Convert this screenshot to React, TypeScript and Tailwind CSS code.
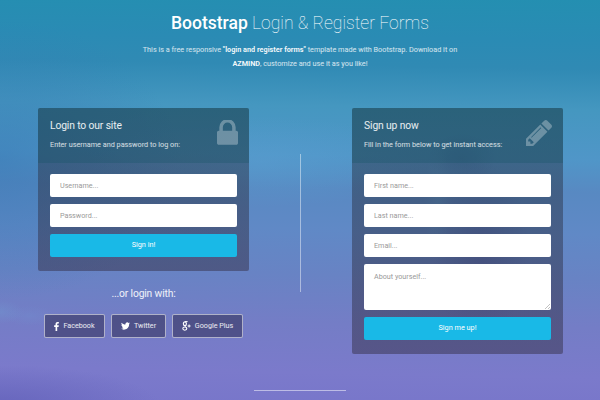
import type { ReactNode } from 'react';

const fieldClass =
  'block w-full rounded-[2px] bg-white px-[10px] text-[7.2px] text-[#777] placeholder:text-[#999] placeholder:opacity-100 outline-none';

function LockIcon() {
  return (
    <svg viewBox="320 192 1152 1344" className="h-[25px] w-[21px] shrink-0 fill-current">
      <path d="M640 768h512v-192q0-106-75-181t-181-75-181 75-75 181v192zm832 96v576q0 40-28 68t-68 28h-960q-40 0-68-28t-28-68v-576q0-40 28-68t68-28h32v-192q0-184 132-316t316-132 316 132 132 316v192h32q40 0 68 28t28 68z" />
    </svg>
  );
}

function PencilIcon() {
  return (
    <svg viewBox="128 149 1515 1515" className="h-[26px] w-[26px] shrink-0 fill-current">
      <path d="M491 1536l91-91-235-235-91 91v107h128v128h107zm523-928q0-22-22-22-10 0-17 7l-542 542q-7 7-7 17 0 22 22 22 10 0 17-7l542-542q7-7 7-17zm-54-192l416 416-832 832h-416v-416zm683 96q0 53-37 90l-166 166-416-416 166-165q36-38 90-38 53 0 91 38l235 234q37 39 37 91z" />
    </svg>
  );
}

function FacebookIcon() {
  return (
    <svg viewBox="479 0 864 1664" className="h-[9px] w-[5px] fill-white">
      <path d="M1343 12v264h-157q-86 0-116 36t-30 108v189h293l-39 296h-254v759h-306v-759h-255v-296h255v-218q0-186 104-288.500t277-102.500q147 0 228 12z" />
    </svg>
  );
}

function TwitterIcon() {
  return (
    <svg viewBox="108 256 1576 1280" className="h-[8px] w-[9px] fill-white">
      <path d="M1684 408q-67 98-162 167 1 14 1 42 0 130-38 259.500t-115.500 248.500-184.500 210.500-258 146-323 54.500q-271 0-496-145 35 4 78 4 225 0 401-138-105-2-188-64.500t-114-159.500q33 5 61 5 43 0 85-11-112-23-185.500-111.500t-73.500-205.500v-4q68 38 146 41-66-44-105-115t-39-154q0-88 44-163 121 149 294.500 238.500t371.500 99.500q-8-38-8-74 0-134 94.500-228.500t228.500-94.500q140 0 236 102 109-21 205-78-37 115-142 178 93-10 186-50z" />
    </svg>
  );
}

function GooglePlusIcon() {
  return (
    <svg viewBox="0 0 9 10" className="h-[10px] w-[9px] fill-none stroke-white">
      <ellipse cx="2.9" cy="2.7" rx="1.5" ry="1.9" strokeWidth="1.2" />
      <path d="M3 .6h2.6M3.6 4.5c-.8.7-.4 1 .4 1.5" strokeWidth="1" />
      <ellipse cx="2.8" cy="7.6" rx="2" ry="1.6" strokeWidth="1.1" />
      <path d="M7.1 3.5v3M5.6 5h3" strokeWidth="1" />
    </svg>
  );
}

function Panel({ title, hint, icon, children }: { title: string; hint: string; icon: ReactNode; children: ReactNode }) {
  return (
    <section className="overflow-hidden rounded-[2px] bg-linear-to-b from-[#25394b]/50 to-[#352f48]/50">
      <header className="flex h-[55px] justify-between bg-[#0c4f5c]/25 pl-3 pr-[11px] pt-[11px]">
        <div>
          <h3 className="text-[10.3px] leading-[14px] tracking-[-0.12px] text-white/90">{title}</h3>
          <p className="mt-[5px] text-[7.27px] leading-[13px] text-white/80">{hint}</p>
        </div>
        <div className="pt-[1px] text-white/30">{icon}</div>
      </header>
      <form className="flex flex-col gap-[7px] px-3 pb-[13.5px] pt-[11px]">{children}</form>
    </section>
  );
}

function Submit({ children }: { children: ReactNode }) {
  return (
    <button type="button" className="h-[23px] rounded-[2px] bg-[#19b9e7] text-center text-[7.3px] text-white">
      {children}
    </button>
  );
}

function Social({ icon, label, width }: { icon: ReactNode; label: string; width: string }) {
  return (
    <a className={`flex h-[24px] items-center justify-center gap-1 rounded-[2px] border border-white/55 bg-[#2f2d55]/55 text-[7.2px] text-white/90 ${width}`}>
      {icon}
      <span>{label}</span>
    </a>
  );
}

export default function App() {
  return (
    <div className="h-[400px] w-[600px] overflow-hidden bg-[radial-gradient(ellipse_26px_10px_at_30px_316px,#6f95d444,transparent),radial-gradient(ellipse_24px_12px_at_0px_312px,#6f9fd455,transparent),radial-gradient(ellipse_50px_90px_at_480px_250px,#43439055,transparent),radial-gradient(ellipse_34px_24px_at_462px_158px,#2c5c9544,transparent),radial-gradient(ellipse_14px_60px_at_438px_205px,#67b0d444,transparent),radial-gradient(ellipse_170px_45px_at_260px_162px,#5a9fd177,transparent),radial-gradient(ellipse_160px_40px_at_0px_405px,#6160b8bb,transparent),radial-gradient(ellipse_180px_140px_at_0px_160px,#3577b388,transparent),linear-gradient(181deg,#248fb1_0%,#2a8bb4_10%,#308ab4_17%,#4597c0_27%,#5096c8_39%,#5889c2_47%,#6089c6_57%,#6883c4_68%,#747dc6_80%,#7b7acb_92%,#7876ca_100%)] font-['Roboto',sans-serif] text-white">
      <div className="flex flex-col items-center">
        <h1 className="mt-[11px] text-[17.55px] font-thin leading-[24px]">
          <strong className="font-medium">Bootstrap</strong> Login &amp; Register Forms
        </h1>
        <p className="mt-[8px] w-[330px] text-center text-[7.27px] leading-[14px] text-white/80">
          This is a free responsive <strong className="font-bold text-white/95">"login and register forms"</strong> template made with Bootstrap. Download it on
          <br />
          <strong className="font-bold text-white/95">AZMIND</strong>, customize and use it as you like!
        </p>
      </div>
      <main className="mt-[37px] flex h-[246px] items-start pl-[38px]">
        <div className="w-[211px]">
          <Panel title="Login to our site" hint="Enter username and password to log on:" icon={<LockIcon />}>
            <input className={`${fieldClass} h-[23px]`} placeholder="Username..." />
            <input className={`${fieldClass} h-[23px]`} placeholder="Password..." />
            <Submit>Sign in!</Submit>
          </Panel>
          <h3 className="mt-[15px] text-center text-[10.3px] leading-[16px] tracking-[-0.15px] text-white/90">...or login with:</h3>
          <div className="mt-[12.5px] flex justify-center gap-[6px]">
            <Social icon={<FacebookIcon />} label="Facebook" width="w-[61px]" />
            <Social icon={<TwitterIcon />} label="Twitter" width="w-[55px]" />
            <Social icon={<GooglePlusIcon />} label="Google Plus" width="w-[71px]" />
          </div>
        </div>
        <div className="ml-[51px] mt-[46px] h-[138px] w-px bg-white/45" />
        <div className="ml-[51px] w-[211px]">
          <Panel title="Sign up now" hint="Fill in the form below to get instant access:" icon={<PencilIcon />}>
            <input className={`${fieldClass} h-[23px]`} placeholder="First name..." />
            <input className={`${fieldClass} h-[23px]`} placeholder="Last name..." />
            <input className={`${fieldClass} h-[23px]`} placeholder="Email..." />
            <div className="relative h-[46px]">
              <textarea className={`${fieldClass} h-[46px] resize-none pt-[8px]`} placeholder="About yourself..." />
              <svg viewBox="0 0 5 5" className="absolute bottom-[1px] right-[1px] size-[5px] stroke-[#999]">
                <path d="M0 5L5 0M3 5L5 3" strokeWidth=".6" />
              </svg>
            </div>
            <Submit>Sign me up!</Submit>
          </Panel>
        </div>
      </main>
      <div className="mx-auto mt-[36px] h-px w-[92px] bg-white/50" />
    </div>
  );
}
